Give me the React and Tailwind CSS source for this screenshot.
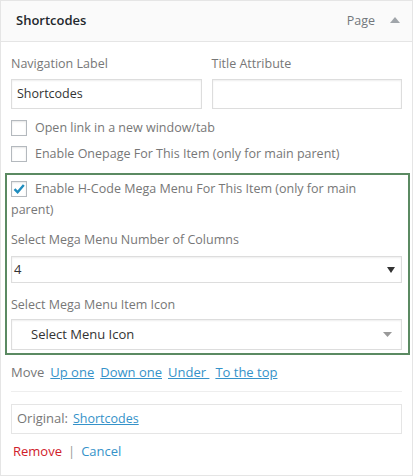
export default function App() {
  const font = { fontFamily: '"Open Sans", "Noto Sans", sans-serif' };
  const box =
    "border border-[#ddd] shadow-[inset_0_1px_2px_rgba(0,0,0,0.07)] bg-white";
  const cb =
    "inline-flex w-[16px] h-[16px] border border-[#b4b9be] bg-white shadow-[inset_0_1px_2px_rgba(0,0,0,0.1)] items-center justify-center shrink-0";
  return (
    <div
      style={font}
      className="w-[413px] h-[476px] border border-[#e5e5e5] bg-white text-[12.5px] text-[#555] overflow-hidden"
    >
      <div className="h-[41px] bg-[#fafafa] border-b border-[#e5e5e5] flex items-center pl-[15px] pr-[12px]">
        <span className="font-semibold text-[#23282d] text-[13px]">Shortcodes</span>
        <span className="ml-auto text-[#72777c] text-[12.5px]">Page</span>
        <svg width="10" height="6" viewBox="0 0 10 6" className="ml-[15px] mb-[2px]">
          <polygon points="0,6 10,6 5,0" fill="#a0a5aa" />
        </svg>
      </div>
      <div className="px-[10px] pt-[13px]">
        <div className="grid grid-cols-2 gap-x-[10px]">
          <div>
            <div className="leading-[18px] text-[#777]">Navigation Label</div>
            <div className={`${box} mt-[6px] h-[30px] flex items-center px-[5px] text-[#333]`}>
              Shortcodes
            </div>
          </div>
          <div>
            <div className="leading-[18px] text-[#777]">Title Attribute</div>
            <div className={`${box} mt-[6px] h-[30px]`}></div>
          </div>
        </div>
        <div className="mt-[11px] flex items-center h-[16px] gap-[8px]">
          <span className={cb}></span>
          <span className="text-[#777]">Open link in a new window/tab</span>
        </div>
        <div className="mt-[10px] flex items-center h-[16px] gap-[8px]">
          <span className={cb}></span>
          <span className="text-[#777]">Enable Onepage For This Item (only for main parent)</span>
        </div>
        <div className="mt-[11px] -ml-[6px] -mr-[8px] border-2 border-[#5b8a62] pl-[4px] pr-[6px] pt-[3px] pb-[3px]">
          <div className="leading-[21px] text-[#777]">
            <span className={`${cb} align-[-3px] mr-[8px]`}>
              <svg width="14" height="14" viewBox="0 0 14 14">
                <path d="M2.5 7.2 L5.6 10.2 L11.8 3" stroke="#1e8cbe" strokeWidth="2.4" fill="none" />
              </svg>
            </span>
            Enable H-Code Mega Menu For This Item (only for main
            <br />
            parent)
          </div>
          <div className="mt-[11px] leading-[18px] text-[#777]">Select Mega Menu Number of Columns</div>
          <div className={`${box} mt-[7px] h-[27px] flex items-center pl-[2px] pr-[6px] text-[#333] text-[13px]`}>
            <span>4</span>
            <svg width="8" height="6" viewBox="0 0 8 6" className="ml-auto">
              <polygon points="0,0 8,0 4,6" fill="#333" />
            </svg>
          </div>
          <div className="mt-[13px] leading-[18px] text-[#777]">Select Mega Menu Item Icon</div>
          <div className={`${box} mt-[5px] h-[31px] flex items-center pl-[19px] pr-[9px] text-[#333] text-[13px]`}>
            <span>Select Menu Icon</span>
            <svg width="9" height="5" viewBox="0 0 9 5" className="ml-auto">
              <polygon points="0,0 9,0 4.5,5" fill="#999" />
            </svg>
          </div>
        </div>
        <div className="mt-[8px] leading-[18px] flex gap-[6px] text-[13px]">
          <span className="text-[#777]">Move</span>
          <a className="text-[#3592c9] underline">Up one</a>
          <a className="text-[#3592c9] underline">Down one</a>
          <a className="text-[#3592c9] underline whitespace-pre">Under </a>
          <a className="text-[#3592c9] underline">To the top</a>
        </div>
        <div className="mt-[10px] border-t border-[#eee]"></div>
        <div className="mt-[12px] h-[30px] border border-[#e5e5e5] flex items-center px-[5px] gap-[5px]">
          <span className="text-[#777] text-[13px]">Original:</span>
          <a className="text-[#3592c9] underline text-[12.5px]">Shortcodes</a>
        </div>
        <div className="mt-[8px] ml-[2px] leading-[18px] flex items-center gap-[6px] text-[13px]">
          <span className="text-[#d0202a]">Remove</span>
          <span className="text-[#999]">|</span>
          <span className="text-[#3592c9]">Cancel</span>
        </div>
      </div>
    </div>
  );
}
